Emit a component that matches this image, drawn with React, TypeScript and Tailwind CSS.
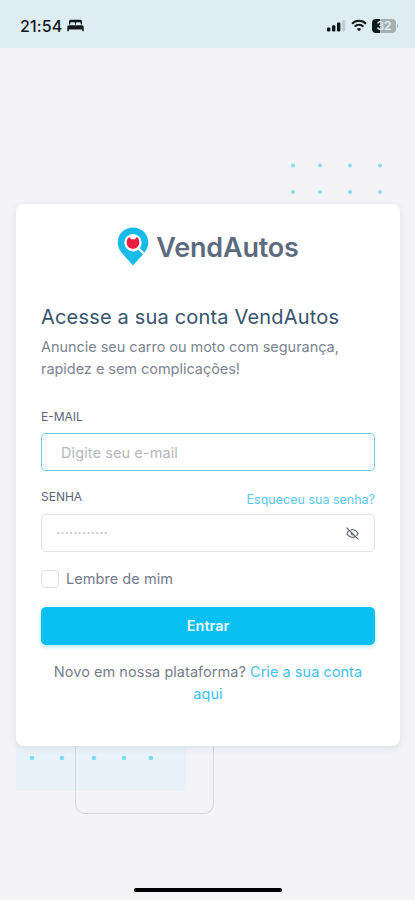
import { ReactNode } from 'react';
import { TbEyeOff } from 'react-icons/tb';

const topDots = [
  [3, 3], [30, 3], [60, 3], [90, 3],
  [3, 29.5], [30, 29.5], [60, 29.5], [90, 29.5],
];

const bottomDots = [16, 46, 78, 108, 135];

const StatusBar = () => (
  <header className="flex h-12 shrink-0 items-center justify-between bg-[#deedf1] pt-[3px] pr-[17px] pl-5 text-[#10191c]">
    <div className="flex items-center gap-[5px]">
      <span className="text-[16px] leading-5 font-medium tracking-[0.1px]">21:54</span>
      <svg width="17" height="13" viewBox="0 0 17 13" fill="currentColor">
        <path d="M2 5.5V2.6C2 1.4 2.7.8 3.8.8h9.4c1.1 0 1.8.6 1.8 1.8v2.9h-1.3V4.3c0-.7-.4-1-1-1H10c-.6 0-1 .3-1 1v1.2H8V4.3c0-.7-.4-1-1-1H4.3c-.6 0-1 .3-1 1v1.2H2Z" />
        <path d="M2.2 6.2h12.6c1.2 0 1.9.7 1.9 1.9v4.1h-1.5v-1.6H1.8v1.6H.3V8.1c0-1.2.7-1.9 1.9-1.9Z" />
      </svg>
    </div>
    <div className="flex items-center gap-[5px]">
      <svg width="19" height="13" viewBox="0 0 19 13" fill="currentColor">
        <rect x="0" y="8.5" width="3.4" height="4" rx="1" />
        <rect x="5" y="6.3" width="3.4" height="6.2" rx="1" />
        <rect x="10" y="3.5" width="3.4" height="9" rx="1" />
        <rect x="15" y="1" width="3.4" height="11.5" rx="1" opacity="0.14" />
      </svg>
      <svg width="16" height="13" viewBox="0 0 16 13" fill="none" stroke="currentColor" strokeWidth="2">
        <path d="M1 4.7a10 10 0 0 1 14 0" />
        <path d="M3.6 7.6a6.3 6.3 0 0 1 8.8 0" />
        <path d="M8 12.3 5.8 10a3.2 3.2 0 0 1 4.4 0L8 12.3Z" fill="currentColor" stroke="none" />
      </svg>
      <div className="flex items-center gap-px">
        <div className="flex h-[14px] w-6 items-center justify-center rounded-[4px] bg-[linear-gradient(90deg,#10191c_32%,#a5b0b3_32%)] text-[12px] leading-none font-semibold text-[#e6f0f2]">
          32
        </div>
        <span className="h-1 w-px rounded-r bg-[#a5b0b3]" />
      </div>
    </div>
  </header>
);

const Logo = () => (
  <div className="flex h-10 items-center justify-center gap-[7px]">
    <svg width="32" height="40" viewBox="0 0 32 40">
      <path d="M16 .6C7.4.6.7 7.2.7 15.6c0 5 2.4 8.8 5.6 12.2L16 38.5l9.7-10.7c3.2-3.4 5.6-7.2 5.6-12.2C31.3 7.2 24.6.6 16 .6Z" fill="#19bce8" />
      <circle cx="16" cy="15.7" r="8.7" fill="#fff" />
      <path d="m21.5 21.5 5.8 5.6" stroke="#fff" strokeWidth="2.2" strokeLinecap="round" />
      <path d="M12.2 10 14 12.2h4L19.8 10c1.5 1.1 2.5 3 2.5 5.2 0 3.9-2.7 6.5-6.3 6.5s-6.3-2.6-6.3-6.5c0-2.2 1-4.1 2.5-5.2Z" fill="#ea1c3f" />
    </svg>
    <span className="pt-0.5 text-[27px] leading-10 font-semibold tracking-[-0.2px] text-[#5d6b7e]">VendAutos</span>
  </div>
);

const FieldLabel = ({ htmlFor, children }: { htmlFor: string; children: ReactNode }) => (
  <label htmlFor={htmlFor} className="text-[12px] leading-4 text-[#5d6579]">
    {children}
  </label>
);

export default function App() {
  return (
    <div className="flex h-[900px] w-[415px] flex-col overflow-hidden bg-[#f3f3f8] font-['Inter','Liberation_Sans',sans-serif]">
      <StatusBar />

      <main className="flex flex-1 flex-col px-4 pt-[156px]">
        <div className="relative w-96">
          {/* Background decoration */}
          <svg className="absolute -top-[42px] left-[274px]" width="96" height="36" fill="#8edcef">
            {topDots.map(([x, y]) => (
              <circle key={`${x}-${y}`} cx={x} cy={y + 0.5} r="2.1" />
            ))}
          </svg>
          <div className="absolute -bottom-[45px] left-0 h-20 w-[170px] bg-[#e9f2f8]" />
          <div className="absolute -bottom-[68px] left-[59px] h-28 w-[139px] rounded-[10px] border border-[#d6d8de]" />
          <svg className="absolute -bottom-4 left-0" width="170" height="8" fill="#7ddcf3">
            {bottomDots.map((x) => (
              <circle key={x} cx={x} cy="4" r="2.3" />
            ))}
          </svg>

          <section className="relative flex h-[542px] flex-col rounded-lg bg-white px-[25px] pt-[23px] shadow-[0_2px_6px_rgba(80,90,120,0.12)]">
            <Logo />

            <h1 className="mt-9 text-[20px] leading-7 tracking-[0.18px] whitespace-nowrap text-[#38536e]">
              Acesse a sua conta VendAutos
            </h1>
            <p className="mt-[5px] text-[14.5px] leading-[22px] tracking-[-0.04px] whitespace-nowrap text-[#7d8591]">
              Anuncie seu carro ou moto com segurança,
              <br />
              rapidez e sem complicações!
            </p>

            <form className="mt-[29px] flex flex-col">
              <FieldLabel htmlFor="email">E-MAIL</FieldLabel>
              <input
                id="email"
                type="email"
                placeholder="Digite seu e-mail"
                className="mt-2 h-[38px] w-[334px] rounded-[5px] border border-[#6fcbee] px-[19px] text-[14.5px] tracking-[0.1px] outline-none placeholder:text-[#b4b7be]"
              />

              <div className="mt-[18px] flex w-[334px] items-start justify-between">
                <FieldLabel htmlFor="password">SENHA</FieldLabel>
                <a href="#" className="mt-[3px] text-[12.5px] leading-4 text-[#5bc8f0]">
                  Esqueceu sua senha?
                </a>
              </div>
              <div className="mt-[6px] flex h-[38px] w-[334px] items-center justify-between rounded-[5px] border border-[#e2e3e7] px-[14px]">
                <input
                  id="password"
                  type="text"
                  placeholder="············"
                  className="w-40 text-[15px] outline-none placeholder:text-[#c4c7cc]"
                />
                <TbEyeOff size={15} className="text-[#5f6774]" />
              </div>

              <label className="mt-[17px] flex items-center gap-[7px] text-[14.5px] leading-5 tracking-[0.05px] text-[#737a89]">
                <input type="checkbox" className="size-[18px] appearance-none rounded-[4px] border border-[#dddfe4]" />
                Lembre de mim
              </label>

              <button
                type="button"
                className="mt-[18px] h-[38px] w-[334px] rounded-[5px] bg-[#08c0f4] text-[14.5px] font-semibold text-[#e9faff] shadow-[0_2px_4px_rgba(8,192,244,0.3)]"
              >
                Entrar
              </button>
            </form>

            <p className="mt-4 w-[334px] text-center text-[14.5px] leading-[22px] tracking-[0.04px] whitespace-nowrap text-[#777e89]">
              Novo em nossa plataforma? <a href="#" className="text-[#42c1ef]">Crie a sua conta<br />aqui</a>
            </p>
          </section>
        </div>
      </main>

      <div className="mb-2 h-1 w-[148px] self-center rounded-full bg-black" />
    </div>
  );
}
